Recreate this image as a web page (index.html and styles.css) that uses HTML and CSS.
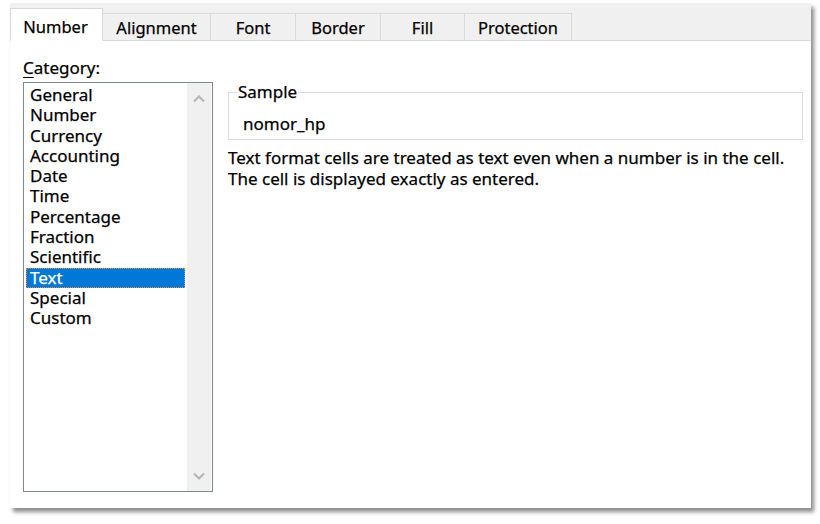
FILE: index.html
```html
<!DOCTYPE html>
<html>
<head>
<meta charset="utf-8">
<link rel="stylesheet" href="styles.css">
</head>
<body>
<div class="dialog">
  <div class="tabs">
    <div class="tab active t-number">Number</div>
    <div class="tab t-align">Alignment</div>
    <div class="tab t-font">Font</div>
    <div class="tab t-border">Border</div>
    <div class="tab t-fill">Fill</div>
    <div class="tab t-prot">Protection</div>
  </div>
  <div class="content">
    <div class="left">
      <div class="label"><span class="ul">C</span>ategory:</div>
      <div class="listbox">
        <ul class="items">
          <li>General</li>
          <li>Number</li>
          <li>Currency</li>
          <li>Accounting</li>
          <li>Date</li>
          <li>Time</li>
          <li>Percentage</li>
          <li>Fraction</li>
          <li>Scientific</li>
          <li class="sel">Text</li>
          <li>Special</li>
          <li>Custom</li>
        </ul>
        <div class="scrollbar">
          <svg class="arrow" width="14" height="10" viewBox="0 0 14 10"><path d="M2 7.5 L7 2.5 L12 7.5" fill="none" stroke="#b4b4b4" stroke-width="2"/></svg>
          <svg class="arrow" width="14" height="10" viewBox="0 0 14 10"><path d="M2 2.5 L7 7.5 L12 2.5" fill="none" stroke="#b4b4b4" stroke-width="2"/></svg>
        </div>
      </div>
    </div>
    <div class="right">
      <fieldset class="sample">
        <legend>Sample</legend>
        <div class="sample-val">nomor_hp</div>
      </fieldset>
      <p class="desc">Text format cells are treated as text even when a number is in the cell.<br>The cell is displayed exactly as entered.</p>
    </div>
  </div>
</div>
</body>
</html>
```
FILE: styles.css
```css
* { box-sizing: border-box; }
html, body { margin: 0; padding: 0; background: #ffffff; }
body {
  min-height: 524px;
  font-family: "Noto Sans", "Open Sans", sans-serif;
  font-size: 17px;
  color: #000;
  -webkit-text-stroke: 0.25px #000;
}
.dialog {
  margin: 3px 0 0 10px;
  width: 801px;
  height: 505px;
  background: #fff;
  box-shadow: 3px 4px 4px rgba(0,0,0,0.45);
  display: flex;
  flex-direction: column;
}
.tabs {
  height: 38px;
  background: #f0f0f0;
  border-bottom: 1px solid #d9d9d9;
  display: flex;
  align-items: flex-end;
  flex: none;
  font-size: 16.5px;
}
.tab {
  height: 28px;
  margin-bottom: -1px;
  border: 1px solid #d9d9d9;
  border-left: none;
  background: #f0f0f0;
  display: flex;
  align-items: center;
  justify-content: center;
  line-height: 1;
  padding-top: 3px;
}
.tab.active {
  height: 33px;
  background: #fff;
  border-left: 1px solid #d9d9d9;
  border-bottom-color: #fff;
  padding-top: 5px;
  padding-right: 2px;
}
.t-number { width: 93px; }
.t-align { width: 108px; }
.t-font { width: 85px; }
.t-border { width: 85px; }
.t-fill { width: 84px; }
.t-prot { width: 107px; }

.content {
  display: flex;
  padding: 17px 0 0 13px;
  gap: 15px;
}
.left { width: 190px; flex: none; }
.label { line-height: 20px; height: 24px; }
.ul { text-decoration: underline; text-underline-offset: 3px; text-decoration-thickness: 1px; }
.listbox {
  height: 410px;
  border: 1px solid #828790;
  display: flex;
  background: #fff;
}
.items {
  list-style: none;
  margin: 0;
  padding: 2px 0 0 2px;
  flex: 1;
}
.items li {
  line-height: 20.3px;
  height: 20.3px;
  padding-left: 4px;
}
.items li.sel {
  background: #0078d7;
  color: #fff;
  -webkit-text-stroke: 0.25px #fff;
  outline: 1px dotted #e08a2a;
  outline-offset: -1px;
}
.scrollbar {
  width: 24px;
  margin: 0 1px 0 2px;
  background: #f0f0f0;
  display: flex;
  flex-direction: column;
  justify-content: space-between;
  align-items: center;
  padding: 11px 0 10px;
}
.arrow { display: block; }

.right { width: 575px; flex: none; }
.sample {
  margin: 0;
  margin-top: 24px;
  padding: 0 0 0 14px;
  height: 58px;
  border: 1px solid #dcdcdc;
  border-radius: 0;
}
.sample legend {
  padding: 0 1px;
  margin-left: -6px;
  line-height: 20px;
}
.sample-val { line-height: 20px; margin-top: 12px; }
.desc {
  margin: 8px 0 0 0;
  line-height: 20.5px;
}
```
